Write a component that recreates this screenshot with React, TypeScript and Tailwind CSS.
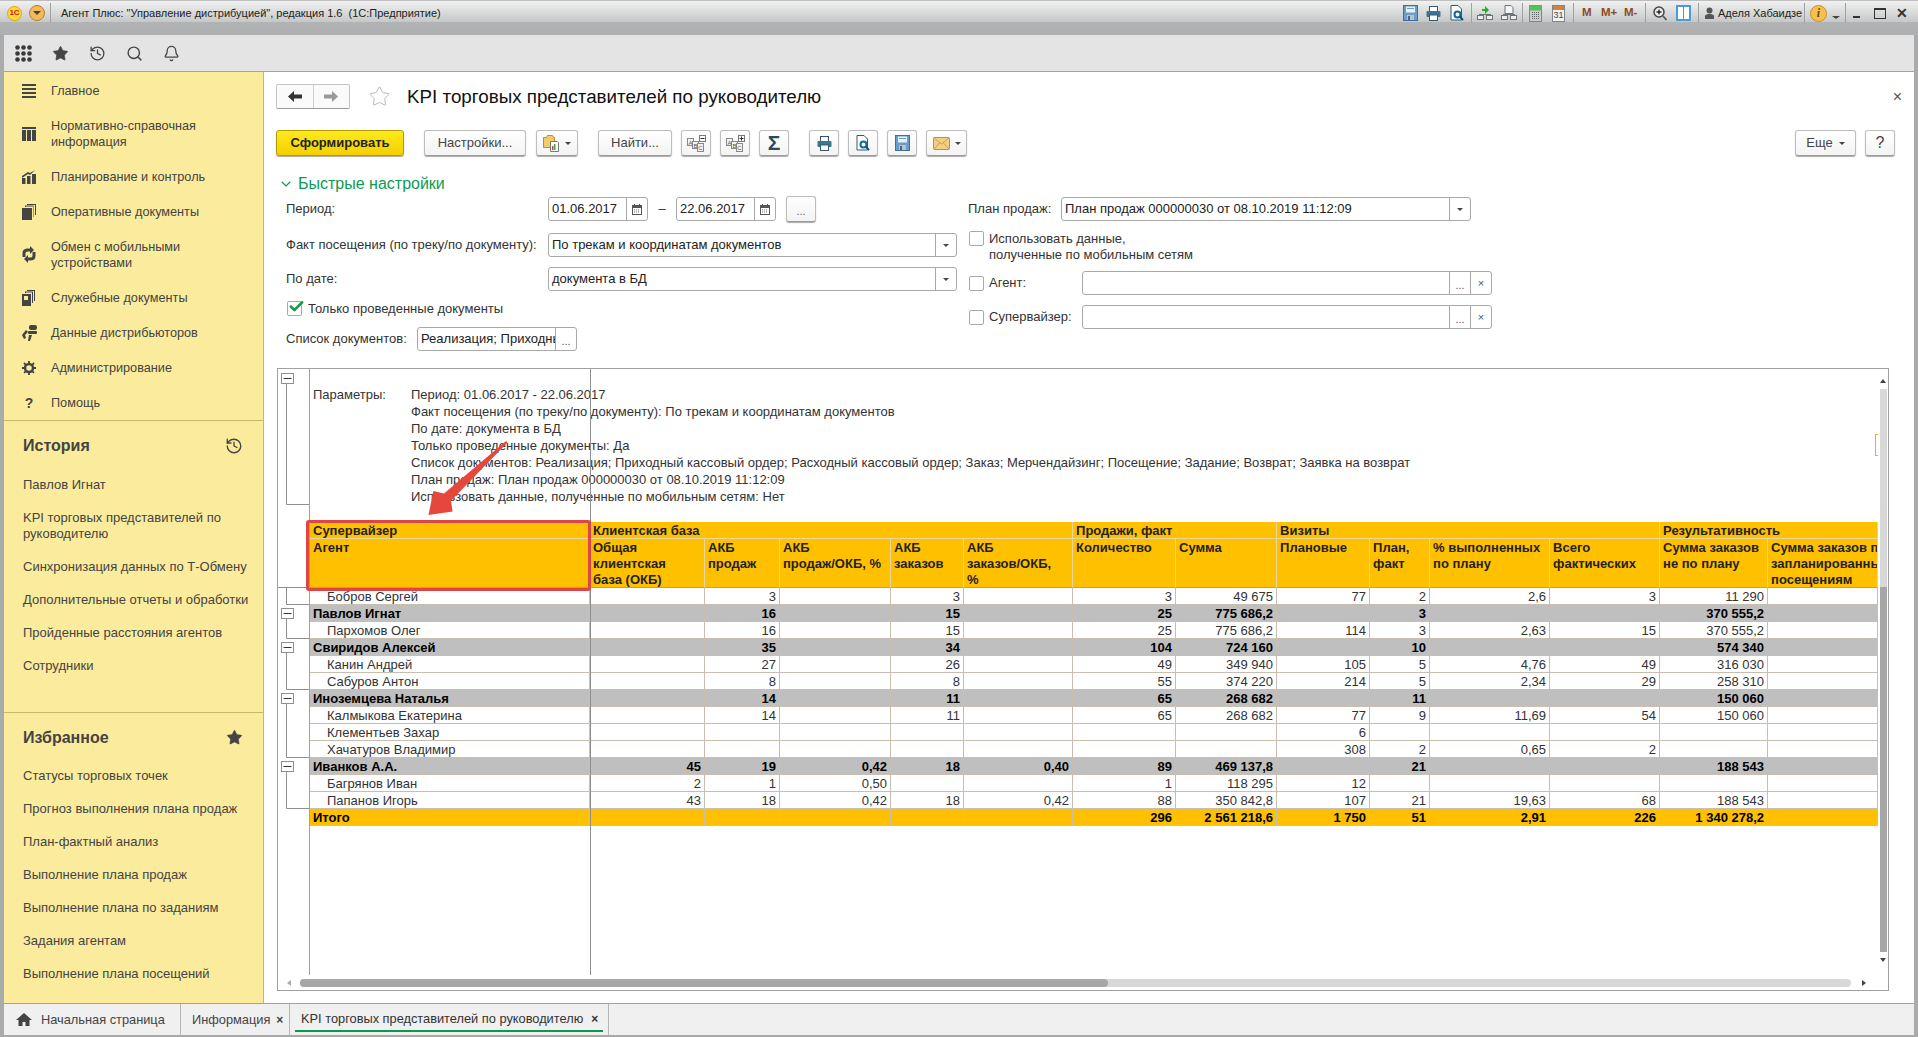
import { ReactNode } from "react";
import { Bell, Check, ChevronDown, History, Search, Star } from "lucide-react";

const FloppyIcon = () => (
  <svg width="15" height="16" viewBox="0 0 15 16">
    <rect x="0.5" y="0.5" width="14" height="15" fill="#6d9cc9" stroke="#3f6f9f" />
    <rect x="3" y="1.5" width="9" height="6" fill="#e8f0f8" />
    <rect x="4" y="3" width="7" height="1" fill="#6d9cc9" />
    <rect x="4" y="10" width="7" height="5" fill="#b8c4cc" />
    <rect x="5" y="11" width="2" height="4" fill="#4b6478" />
  </svg>
);

const PrinterIcon = () => (
  <svg width="15" height="15" viewBox="0 0 15 15">
    <rect x="3.5" y="0.5" width="8" height="5" fill="#fff" stroke="#33586f" />
    <rect x="0.5" y="5" width="14" height="6" rx="1" fill="#3f7396" />
    <rect x="3.5" y="9" width="8" height="5.5" fill="#fff" stroke="#33586f" />
  </svg>
);

const PreviewIcon = () => (
  <svg width="14" height="16" viewBox="0 0 14 16">
    <path d="M1 .5h7l3.500 3.500v11H1z" fill="#fff" stroke="#33586f" />
    <circle cx="7.500" cy="9.500" r="3" fill="#fff" stroke="#0f6a96" strokeWidth="2" />
    <path d="M10 12l3 3" stroke="#0f4f76" strokeWidth="2" />
  </svg>
);

const TransferIcon = ({ green }: { green?: boolean }) => (
  <svg width="16" height="16" viewBox="0 0 16 16">
    {green ? <path d="M5 4h3V1l4 4-4 4V6H5z" fill="#22b322" /> : <path d="M4 .5h6l2 2v6H4z" fill="#f4f4f4" stroke="#6c7278" />}
    <rect x="0.500" y="10.500" width="6" height="4" fill="#eee" stroke="#6c7278" />
    <rect x="9.500" y="10.500" width="6" height="4" fill="#eee" stroke="#6c7278" />
    <path d="M2 9.500h12" stroke="#6c7278" />
  </svg>
);

const CalcIcon = () => (
  <svg width="13" height="17" viewBox="0 0 13 17">
    <rect x="0.500" y="0.500" width="12" height="16" fill="#c9cdce" stroke="#80878a" />
    <rect x="0.500" y="0.500" width="12" height="5" fill="#54c15a" />
    <path d="M3 7.500h7M3 9.500h7M3 11.500h7M3 13.500h7" stroke="#5d6467" strokeDasharray="1 1" />
  </svg>
);

const CalendarIcon = () => (
  <div className="w-[13px] h-[17px] border border-[#80878a] bg-[#f2f2f2] flex flex-col items-center">
    <div className="w-full h-[4px] bg-[#d27f42]" />
    <span className="text-[9px] leading-[11px] text-[#444]">31</span>
  </div>
);

const MagnifierPlus = () => (
  <svg width="14" height="15" viewBox="0 0 14 15">
    <circle cx="6" cy="6" r="5" fill="#eee" stroke="#444" strokeWidth="1.500" />
    <path d="M3.500 6h5M6 3.500v5" stroke="#222" strokeWidth="1.300" />
    <path d="M10 10l3.500 4" stroke="#555" strokeWidth="1.800" />
  </svg>
);

const DocAbcIcon = ({ plus }: { plus?: boolean }) => (
  <svg width="19" height="17" viewBox="0 0 19 17" fontFamily="Liberation Sans" fontSize="6" fill="#555" textAnchor="middle">
    <rect x="0.500" y="3.500" width="6" height="7" fill="#f4f4f4" stroke="#888" />
    <rect x="5.500" y="6.500" width="6" height="7" fill="#f4f4f4" stroke="#888" />
    <rect x="10.500" y="8.500" width="6" height="8" fill="#f4f4f4" stroke="#888" />
    <text x="3.500" y="9.500">A</text>
    <text x="8.500" y="12.500">B</text>
    <text x="13.500" y="15">C</text>
    <rect x="12.500" y="0.500" width="6" height="6" fill="#fff" stroke="#777" />
    <path d="M13.500 3.500h4" stroke="#333" />
    {plus && <path d="M15.500 1.500v4" stroke="#333" />}
  </svg>
);

const MailIcon = () => (
  <svg width="17" height="13" viewBox="0 0 17 13">
    <rect x="0.500" y="0.500" width="16" height="12" rx="1" fill="#f6cf85" stroke="#c98e33" />
    <path d="M1 1l7.500 6L16 1M1 12l5.500-6M16 12l-5.500-6" fill="none" stroke="#d19a44" />
  </svg>
);

const FolderReportIcon = () => (
  <svg width="16" height="18" viewBox="0 0 16 18">
    <path d="M0.500 3.500h3l1-2h5l1 2h1v10H.500z" fill="#f2cd6e" stroke="#b98d2c" />
    <path d="M7.500 7.500h7l1 1v9h-8z" fill="#fff" stroke="#777" />
    <rect x="9" y="12" width="1.500" height="4" fill="#d04040" />
    <rect x="11" y="10" width="1.500" height="6" fill="#44a044" />
  </svg>
);

const Caret = ({ className = "" }: { className?: string }) => (
  <span className={`inline-block w-0 h-0 border-x-[3px] border-x-transparent border-t-[3px] border-t-[#444] ${className}`} />
);

const TitleSep = ({ className }: { className: string }) => <div className={`w-px h-[20px] bg-[#9fa1a3] ${className}`} />;

const TitleBar = () => (
  <div className="h-[35px] shrink-0 bg-[linear-gradient(to_bottom,#8c8c8c_0,#f1f1f1_1px,#c6c7c8_22px,#b2b3b4_22px,#aeafb0_35px)]">
    <div className="h-[26px] flex items-center text-[11px] text-[#222]">
      <div className="ml-[7px] w-[15px] h-[15px] rounded-full bg-[#ffd83a] border border-[#e0a800] flex items-center justify-center text-[8px] leading-none font-bold text-[#d4201c]">
        1С
      </div>
      <div className="ml-[7px] w-[16px] h-[16px] rounded-full bg-[#f5b85a] border border-[#b9802f] flex items-center justify-center">
        <Caret className="border-x-[4px] border-t-[4px]" />
      </div>
      <TitleSep className="ml-[5px]" />
      <span className="ml-[10px] whitespace-pre">Агент Плюс: "Управление дистрибуцией", редакция 1.6  (1С:Предприятие)</span>
      <div className="ml-auto flex items-center">
        <FloppyIcon />
        <div className="ml-[8px]"><PrinterIcon /></div>
        <div className="ml-[9px]"><PreviewIcon /></div>
        <TitleSep className="ml-[7px]" />
        <div className="ml-[5px]"><TransferIcon green /></div>
        <div className="ml-[8px]"><TransferIcon /></div>
        <TitleSep className="ml-[5px]" />
        <div className="ml-[6px]"><CalcIcon /></div>
        <div className="ml-[10px]"><CalendarIcon /></div>
        <TitleSep className="ml-[8px]" />
        <span className="ml-[8px] w-[10px] text-[11.500px] font-bold text-[#8a4d22]">M</span>
        <span className="ml-[9px] w-[16px] text-[11.500px] font-bold text-[#8a4d22] whitespace-nowrap">M+</span>
        <span className="ml-[7px] w-[14px] text-[11.500px] font-bold text-[#8a4d22] whitespace-nowrap">M-</span>
        <TitleSep className="ml-[7px]" />
        <div className="ml-[7px]"><MagnifierPlus /></div>
        <div className="ml-[9px] w-[15px] h-[16px] border-2 border-[#4b9bd8] bg-white flex justify-center">
          <div className="w-px bg-[#4b9bd8]" />
        </div>
        <TitleSep className="ml-[7px]" />
        <svg className="ml-[5px]" width="11" height="13" viewBox="0 0 11 13">
          <circle cx="5.500" cy="3.500" r="3" fill="#555" />
          <path d="M1 12V8.500Q5.500 5 10 8.500V12z" fill="#555" />
        </svg>
        <span className="ml-[3px] w-[82px] text-[11px] whitespace-nowrap">Аделя Хабаидзе</span>
        <TitleSep className="ml-[4px]" />
        <div className="ml-[5px] w-[17px] h-[17px] rounded-full bg-[#f6c04d] border border-[#c98e33] flex items-center justify-center font-['Liberation_Serif'] italic font-bold text-[12px] leading-none text-[#6b4a12]">
          i
        </div>
        <Caret className="ml-[5px] mt-[8px] border-x-[4px]" />
        <TitleSep className="ml-[5px]" />
        <div className="ml-[7px] mt-[8px] w-[7px] h-[2px] bg-[#333]" />
        <div className="ml-[14px] w-[12px] h-[11px] border border-[#333] border-t-2 bg-transparent" />
        <span className="ml-[10px] mr-[12px] w-[10px] text-[14px] leading-none font-bold text-[#333]">✕</span>
      </div>
    </div>
  </div>
);

const GridDots = () => (
  <svg width="17" height="17" viewBox="0 0 17 17" fill="#3a3a3a">
    {[0, 1, 2].map((row) =>
      [0, 1, 2].map((col) => <circle key={`${row}${col}`} cx={2.5 + col * 6} cy={2.5 + row * 6} r="2.300" />)
    )}
  </svg>
);

const AppToolbar = () => (
  <div className="h-[37px] shrink-0 bg-[#e4e4e4] border-b border-[#a2a2a2] flex items-center pl-[11px] gap-[20px] text-[#444]">
    <GridDots />
    <Star size={17} fill="#444" strokeWidth={1} />
    <History size={17} strokeWidth={1.8} />
    <Search size={17} strokeWidth={2} />
    <Bell size={17} strokeWidth={1.8} />
  </div>
);

const navIcons: Record<string, ReactNode> = {
  menu: (
    <svg width="14" height="14" viewBox="0 0 14 14" fill="#444">
      <rect y="0" width="14" height="2" /><rect y="4" width="14" height="2" /><rect y="8" width="14" height="2" /><rect y="12" width="14" height="2" />
    </svg>
  ),
  table: (
    <svg width="14" height="14" viewBox="0 0 14 14" fill="#444">
      <rect y="0" width="14" height="2" /><rect y="3" width="4" height="11" /><rect x="5" y="3" width="4" height="11" /><rect x="10" y="3" width="4" height="11" />
    </svg>
  ),
  chart: (
    <svg width="14" height="14" viewBox="0 0 14 14" fill="#444">
      <rect y="8" width="3.500" height="6" /><rect x="5" y="6" width="3.500" height="8" /><rect x="10" y="4" width="4" height="10" /><path d="M0 6l6-4 2 1 5-3-5 5-2-1-6 4z" />
    </svg>
  ),
  docs: (
    <svg width="14" height="16" viewBox="0 0 14 16" fill="#444">
      <rect x="0" y="4" width="10" height="12" /><path d="M3 3V1.500h8.500V13H11V2.500H4V3z" /><path d="M5 1V0h9v11h-1V1z" />
    </svg>
  ),
  sync: (
    <svg width="14" height="17" viewBox="0 0 14 17" fill="none" stroke="#444" strokeWidth="3">
      <path d="M2 11V7q0-3 4-3h3M12 6v4q0 3-4 3H5" />
      <path d="M8 0l4 4-4 4z" fill="#444" stroke="none" /><path d="M6 9l-4 4 4 4z" fill="#444" stroke="none" />
    </svg>
  ),
  service: (
    <svg width="13" height="16" viewBox="0 0 13 16" fill="#444">
      <rect x="0" y="4" width="9" height="12" /><rect x="2" y="6" width="4" height="4" fill="#fbeb9c" /><path d="M3 3V1.500h8V13h-1V2.500H4V3z" /><path d="M5 1V0h8v11h-1V1z" />
    </svg>
  ),
  dist: (
    <svg width="16" height="16" viewBox="0 0 16 16" fill="#444">
      <rect x="7" y="0" width="8" height="5" rx="2" /><rect x="6" y="6" width="9" height="3" rx="1" /><path d="M4 5L0 10l2 4 2-1-1-3 3-3zM7 10h3l-2 6H6z" />
    </svg>
  ),
  gear: (
    <svg width="14" height="14" viewBox="0 0 14 14">
      <circle cx="7" cy="7" r="4" fill="none" stroke="#444" strokeWidth="2.500" />
      <path d="M7 0v14M0 7h14M2 2l10 10M12 2L2 12" stroke="#444" strokeWidth="1.800" strokeDasharray="2.500 9" />
    </svg>
  ),
  help: <span className="w-[14px] text-center text-[14px] leading-none font-bold text-[#444]">?</span>,
};

const navItems: { icon: string; text: ReactNode; tall?: boolean }[] = [
  { icon: "menu", text: "Главное" },
  { icon: "table", text: <>Нормативно-справочная<br />информация</>, tall: true },
  { icon: "chart", text: "Планирование и контроль" },
  { icon: "docs", text: "Оперативные документы" },
  { icon: "sync", text: <>Обмен с мобильными<br />устройствами</>, tall: true },
  { icon: "service", text: "Служебные документы" },
  { icon: "dist", text: "Данные дистрибьюторов" },
  { icon: "gear", text: "Администрирование" },
  { icon: "help", text: "Помощь" },
];

const historyItems: ReactNode[] = [
  "Павлов Игнат",
  <>KPI торговых представителей по<br />руководителю</>,
  "Синхронизация данных по Т-Обмену",
  "Дополнительные отчеты и обработки",
  "Пройденные расстояния агентов",
  "Сотрудники",
];

const favoriteItems = [
  "Статусы торговых точек",
  "Прогноз выполнения плана продаж",
  "План-фактный анализ",
  "Выполнение плана продаж",
  "Выполнение плана по заданиям",
  "Задания агентам",
  "Выполнение плана посещений",
];

const SideHeading = ({ title, icon, className = "h-[47px]" }: { title: string; icon: ReactNode; className?: string }) => (
  <div className={`${className} pt-[3px] pl-[19px] pr-[20px] flex items-center justify-between text-[16px] font-bold text-[#444]`}>
    {title}
    {icon}
  </div>
);

const Sidebar = () => (
  <aside className="w-[260px] shrink-0 bg-[#fbeb9c] border-r border-[#c9b866] flex flex-col text-[13px] leading-[16px] text-[#444]">
    <nav className="pt-px h-[348px] shrink-0 text-[12.700px]">
      {navItems.map((item) => (
        <div key={item.icon} className={`flex items-center ${item.tall ? "h-[51px]" : "h-[35px]"}`}>
          <div className="w-[47px] pl-[18px] flex items-center shrink-0">{navIcons[item.icon]}</div>
          <div>{item.text}</div>
        </div>
      ))}
    </nav>
    <section className="h-[292px] shrink-0 border-t border-[#c9b866]">
      <SideHeading title="История" icon={<History size={18} strokeWidth={1.8} />} />
      {historyItems.map((item, i) => (
        <div key={i} className="py-[8.5px] pl-[19px]">{item}</div>
      ))}
    </section>
    <section className="border-t border-[#c9b866]">
      <SideHeading className="h-[46px]" title="Избранное" icon={<Star size={17} fill="#444" strokeWidth={1} />} />
      {favoriteItems.map((item) => (
        <div key={item} className="py-[8.5px] pl-[19px]">{item}</div>
      ))}
    </section>
  </aside>
);

const Btn = ({ className = "", children }: { className?: string; children: ReactNode }) => (
  <button className={`h-[26px] shrink-0 flex items-center justify-center rounded-[3px] border border-[#bdbdbd] border-b-[#9a9a9a] bg-[linear-gradient(to_bottom,#ffffff,#f3f3f3)] shadow-[0_1px_1px_#aaa] text-[13px] text-[#444] ${className}`}>
    {children}
  </button>
);

const Field = ({ className = "", children, buttons }: { className?: string; children?: ReactNode; buttons: ReactNode }) => (
  <div className={`h-[24px] flex rounded-[3px] border border-[#a9a9a9] bg-white text-[13px] leading-[22px] text-[#222] ${className}`}>
    <div className="flex-1 pl-[3px] overflow-hidden whitespace-nowrap">{children}</div>
    {buttons}
  </div>
);

const FieldBtn = ({ className = "w-[21px]", children }: { className?: string; children: ReactNode }) => (
  <div className={`${className} shrink-0 border-l border-[#a9a9a9] flex items-center justify-center text-[#555]`}>{children}</div>
);

const CalIcon = () => (
  <svg width="10" height="11" viewBox="0 0 10 11">
    <rect x="0.500" y="1.500" width="9" height="9" fill="#fff" stroke="#555" />
    <rect x="0" y="1" width="10" height="3" fill="#555" />
    <rect x="2" y="0" width="1" height="2" fill="#555" /><rect x="7" y="0" width="1" height="2" fill="#555" />
    <path d="M2 6h6M2 8h6" stroke="#777" strokeDasharray="1 1" />
  </svg>
);

const Dots = () => <span className="text-[11px] leading-none text-[#555] pt-[5px]">...</span>;
const Cross = () => <span className="text-[11px] leading-none text-[#555]">×</span>;

const CheckBox = ({ checked, className = "" }: { checked?: boolean; className?: string }) => (
  <div className={`relative w-[15px] h-[15px] shrink-0 rounded-[2px] border border-[#a9a9a9] bg-white ${className}`}>
    {checked && <Check className="absolute -top-[4px] left-0" size={17} strokeWidth={3.5} color="#139a49" />}
  </div>
);

const BackArrow = ({ color, flip }: { color: string; flip?: boolean }) => (
  <svg className={flip ? "-scale-x-100" : ""} width="14" height="11" viewBox="0 0 14 11" fill={color}>
    <path d="M0 5.500L6 0v3.500h8v4H6V11z" />
  </svg>
);

const CommandRow = () => (
  <div className="mt-[21px] flex items-center pr-[19px]">
    <button className="h-[26px] w-[128px] rounded-[3px] border border-[#b39b00] bg-[linear-gradient(to_bottom,#fdea1c,#f5cf00)] shadow-[0_1px_1px_#aaa] text-[13px] font-bold text-[#222]">
      Сформировать
    </button>
    <Btn className="ml-[20px] w-[102px]">Настройки...</Btn>
    <Btn className="ml-[10px] w-[42px] gap-[6px]"><FolderReportIcon /><Caret /></Btn>
    <Btn className="ml-[20px] w-[74px]">Найти...</Btn>
    <Btn className="ml-[9px] w-[30px]"><DocAbcIcon /></Btn>
    <Btn className="ml-[9px] w-[30px]"><DocAbcIcon plus /></Btn>
    <Btn className="ml-[9px] w-[30px] text-[21px] font-bold text-[#33475b]">Σ</Btn>
    <Btn className="ml-[20px] w-[30px]"><PrinterIcon /></Btn>
    <Btn className="ml-[9px] w-[30px]"><PreviewIcon /></Btn>
    <Btn className="ml-[9px] w-[30px]"><FloppyIcon /></Btn>
    <Btn className="ml-[9px] w-[41px] gap-[5px]"><MailIcon /><Caret /></Btn>
    <Btn className="ml-auto w-[61px] gap-[6px]">Еще <Caret /></Btn>
    <Btn className="ml-[9px] w-[30px] text-[16px]">?</Btn>
  </div>
);

const QuickSettings = () => (
  <>
    <div className="mt-[15px] h-[25px] flex items-center gap-[4px] pl-[2px] text-[16px] text-[#0d9a52]">
      <ChevronDown size={16} strokeWidth={1.6} />
      <span>Быстрые настройки</span>
    </div>
    <div className="flex text-[13px] text-[#333]">
      <div className="w-[692px] shrink-0 pl-[10px] pt-[1px]">
        <div className="h-[24px] flex items-center">
          <span className="w-[262px]">Период:</span>
          <Field className="w-[100px]" buttons={<FieldBtn><CalIcon /></FieldBtn>}>01.06.2017</Field>
          <span className="w-[28px] text-center">–</span>
          <Field className="w-[100px]" buttons={<FieldBtn><CalIcon /></FieldBtn>}>22.06.2017</Field>
          <Btn className="ml-[10px] w-[30px]"><span className="text-[11px] text-[#666] pt-[5px]">...</span></Btn>
        </div>
        <div className="mt-[12px] h-[24px] flex items-center">
          <span className="w-[262px]">Факт посещения (по треку/по документу):</span>
          <Field className="w-[409px]" buttons={<FieldBtn><Caret /></FieldBtn>}>По трекам и координатам документов</Field>
        </div>
        <div className="mt-[10px] h-[24px] flex items-center">
          <span className="w-[262px]">По дате:</span>
          <Field className="w-[409px]" buttons={<FieldBtn><Caret /></FieldBtn>}>документа в БД</Field>
        </div>
        <div className="mt-[10px] h-[15px] flex items-center gap-[6px] pl-px">
          <CheckBox checked />
          <span>Только проведенные документы</span>
        </div>
        <div className="mt-[11px] h-[24px] flex items-center">
          <span className="w-[131px]">Список документов:</span>
          <Field className="w-[160px]" buttons={<FieldBtn><Dots /></FieldBtn>}>Реализация; Приходный</Field>
        </div>
      </div>
      <div className="pt-[1px]">
        <div className="h-[24px] flex items-center">
          <span className="w-[93px]">План продаж:</span>
          <Field className="w-[410px]" buttons={<FieldBtn><Caret /></FieldBtn>}>План продаж 000000030 от 08.10.2019 11:12:09</Field>
        </div>
        <div className="mt-[10px] h-[34px] flex items-start gap-[5px] pl-px leading-[16px]">
          <CheckBox />
          <span>Использовать данные,<br />полученные по мобильным сетям</span>
        </div>
        <div className="mt-[6px] h-[24px] flex items-center">
          <CheckBox className="ml-px" />
          <span className="ml-[5px] w-[93px]">Агент:</span>
          <Field className="w-[410px]" buttons={<><FieldBtn><Dots /></FieldBtn><FieldBtn><Cross /></FieldBtn></>} />
        </div>
        <div className="mt-[10px] h-[24px] flex items-center">
          <CheckBox className="ml-px" />
          <span className="ml-[5px] w-[93px]">Супервайзер:</span>
          <Field className="w-[410px]" buttons={<><FieldBtn><Dots /></FieldBtn><FieldBtn><Cross /></FieldBtn></>} />
        </div>
      </div>
    </div>
  </>
);

const paramLines = [
  "Период: 01.06.2017 - 22.06.2017",
  "Факт посещения (по треку/по документу): По трекам и координатам документов",
  "По дате: документа в БД",
  "Только проведенные документы: Да",
  "Список документов: Реализация; Приходный кассовый ордер; Расходный кассовый ордер; Заказ; Мерчендайзинг; Посещение; Задание; Возврат; Заявка на возврат",
  "План продаж: План продаж 000000030 от 08.10.2019 11:12:09",
  "Использовать данные, полученные по мобильным сетям: Нет",
];

type RowKind = "item" | "group" | "total";
const rows: { kind: RowKind; name: string; v: string[] }[] = [
  { kind: "item", name: "Бобров Сергей", v: ["", "3", "", "3", "", "3", "49 675", "77", "2", "2,6", "3", "11 290", ""] },
  { kind: "group", name: "Павлов Игнат", v: ["", "16", "", "15", "", "25", "775 686,2", "", "3", "", "", "370 555,2", ""] },
  { kind: "item", name: "Пархомов Олег", v: ["", "16", "", "15", "", "25", "775 686,2", "114", "3", "2,63", "15", "370 555,2", ""] },
  { kind: "group", name: "Свиридов Алексей", v: ["", "35", "", "34", "", "104", "724 160", "", "10", "", "", "574 340", ""] },
  { kind: "item", name: "Канин Андрей", v: ["", "27", "", "26", "", "49", "349 940", "105", "5", "4,76", "49", "316 030", ""] },
  { kind: "item", name: "Сабуров Антон", v: ["", "8", "", "8", "", "55", "374 220", "214", "5", "2,34", "29", "258 310", ""] },
  { kind: "group", name: "Иноземцева Наталья", v: ["", "14", "", "11", "", "65", "268 682", "", "11", "", "", "150 060", ""] },
  { kind: "item", name: "Калмыкова Екатерина", v: ["", "14", "", "11", "", "65", "268 682", "77", "9", "11,69", "54", "150 060", ""] },
  { kind: "item", name: "Клементьев Захар", v: ["", "", "", "", "", "", "", "6", "", "", "", "", ""] },
  { kind: "item", name: "Хачатуров Владимир", v: ["", "", "", "", "", "", "", "308", "2", "0,65", "2", "", ""] },
  { kind: "group", name: "Иванков А.А.", v: ["45", "19", "0,42", "18", "0,40", "89", "469 137,8", "", "21", "", "", "188 543", ""] },
  { kind: "item", name: "Багрянов Иван", v: ["2", "1", "0,50", "", "", "1", "118 295", "12", "", "", "", "", ""] },
  { kind: "item", name: "Папанов Игорь", v: ["43", "18", "0,42", "18", "0,42", "88", "350 842,8", "107", "21", "19,63", "68", "188 543", ""] },
  { kind: "total", name: "Итого", v: ["", "", "", "", "", "296", "2 561 218,6", "1 750", "51", "2,91", "226", "1 340 278,2", ""] },
];

const colWidths = [280, 115, 75, 111, 73, 109, 103, 101, 93, 60, 120, 110, 108, 110];

const headers: ReactNode[] = [
  <>Общая<br />клиентская<br />база (ОКБ)</>,
  <>АКБ<br />продаж</>,
  <>АКБ<br />продаж/ОКБ, %</>,
  <>АКБ<br />заказов</>,
  <>АКБ<br />заказов/ОКБ,<br />%</>,
  "Количество",
  "Сумма",
  "Плановые",
  <>План,<br />факт</>,
  <>% выполненных<br />по плану</>,
  <>Всего<br />фактических</>,
  <>Сумма заказов<br />не по плану</>,
  <>Сумма заказов по<br />запланированным<br />посещениям</>,
];

const rowBg: Record<RowKind, string> = {
  item: "bg-white",
  group: "bg-[#bfbfbf] font-bold text-black",
  total: "bg-[#ffc000] font-bold text-black",
};

const ReportTable = () => (
  <table className="table-fixed w-[1568px] border-separate border-spacing-0 text-[13px] leading-[16px] text-[#333]">
    <colgroup>
      {colWidths.map((w, i) => <col key={i} style={{ width: w }} />)}
    </colgroup>
    <tbody>
      <tr className="bg-[#ffc000] font-bold text-[#222]">
        {[["Супервайзер", 1], ["Клиентская база", 5], ["Продажи, факт", 2], ["Визиты", 4], ["Результативность", 2]].map(([title, span]) => (
          <td key={title} colSpan={span as number} className="h-[17px] p-0 pt-[2px] pl-[3px] leading-[14px] border-r border-b border-[#e8d8a0] whitespace-nowrap overflow-hidden">
            {title}
          </td>
        ))}
      </tr>
      <tr className="bg-[#ffc000] font-bold text-[#222] align-top">
        <td className="h-[49px] p-0 pt-px pl-[3px] border-r border-b border-r-[#e8d8a0] border-b-[#a0a0a0]">Агент</td>
        {headers.map((h, i) => (
          <td key={i} className="h-[49px] p-0 pt-px pl-[3px] border-r border-b border-r-[#e8d8a0] border-b-[#a0a0a0] whitespace-nowrap overflow-hidden">
            <div className="h-[47px]">{h}</div>
          </td>
        ))}
      </tr>
      {rows.map((row) => (
        <tr key={row.name} className={rowBg[row.kind]}>
          <td className={`h-[17px] p-0 pt-[2px] leading-[14px] border-r border-b border-[#c9bfb0] whitespace-nowrap overflow-hidden ${row.kind === "item" ? "pl-[17px]" : "pl-[3px]"}`}>
            {row.name}
          </td>
          {row.v.map((value, i) => (
            <td key={i} className="h-[17px] p-0 pt-[2px] pr-[3px] leading-[14px] text-right border-r border-b border-[#c9bfb0] whitespace-nowrap overflow-hidden">
              {value}
            </td>
          ))}
        </tr>
      ))}
    </tbody>
  </table>
);

// outline brackets of the grouped rows
const outlineGroups = [
  { box: 9, end: 135 },
  { box: 244, end: 269 },
  { box: 278, end: 320 },
  { box: 329, end: 388 },
  { box: 397, end: 439 },
];

const OutlineGutter = () => (
  <div className="w-[32px] shrink-0 border-r border-[#a0a0a0]">
    <svg width="31" height="606" viewBox="0 0 31 606" fill="none" stroke="#8f8f8f">
      <path d="M0 218.500h31M8.500 219v16.500H31" />
      {outlineGroups.map(({ box, end }) => (
        <g key={box}>
          <rect x="3.500" y={box - 4.5} width="12" height="10" fill="#fff" />
          <path d={`M5.500 ${box + 0.5}h8`} stroke="#333" />
          <path d={`M8.500 ${box + 5.5}V${end + 0.5}H31`} />
        </g>
      ))}
    </svg>
  </div>
);

const ReportPanel = () => (
  <div className="relative ml-px mt-[17px] h-[623px] w-[1612px] border border-[#a0a0a0] flex flex-col">
    <div className="flex h-[606px]">
      <OutlineGutter />
      <div className="relative w-[1568px] overflow-hidden">
        <div className="h-[153px] pt-[17px] pl-[3px] grid grid-cols-[98px_1fr] text-[13px] leading-[17px] text-[#333]">
          <span>Параметры:</span>
          <div>
            {paramLines.map((line) => <div key={line} className="whitespace-nowrap">{line}</div>)}
          </div>
        </div>
        <ReportTable />
        <div className="absolute left-[280px] top-0 bottom-0 w-px bg-[#8f8f8f]" />
        <div className="absolute left-[1565px] top-[65px] w-[3px] h-[22px] border-l border-y border-[#f0b400]" />
      </div>
      <div className="flex-1 flex flex-col items-end pr-px">
        <span className="mt-[10px] mr-px w-0 h-0 border-x-[3px] border-x-transparent border-b-[4px] border-b-[#444]" />
        <div className="mt-[6px] w-[7px] h-[563px] bg-[#d8d8d8] flex flex-col justify-end">
          <div className="h-[365px] bg-[#a6a6a6]" />
        </div>
        <span className="mt-[6px] mr-px w-0 h-0 border-x-[3px] border-x-transparent border-t-[4px] border-t-[#444]" />
      </div>
    </div>
    <div className="h-[15px] flex items-center">
      <span className="ml-[9px] w-0 h-0 border-y-[3px] border-y-transparent border-r-[4px] border-r-[#aaa]" />
      <div className="ml-[9px] w-[1551px] h-[8px] rounded-full bg-[#d8d8d8]">
        <div className="w-[808px] h-[8px] rounded-full bg-[#a6a6a6]" />
      </div>
      <span className="ml-[11px] w-0 h-0 border-y-[3px] border-y-transparent border-l-[4px] border-l-[#444]" />
    </div>
    <div className="absolute left-[28px] top-[151px] w-[285px] h-[71px] rounded-[3px] border-[3px] border-[#e04545]" />
    <svg className="absolute left-[140px] top-[65px]" width="100" height="90" viewBox="140 65 100 90">
      <path d="M228 72L229.500 73.500 173 131.700 174.600 142.500 150.500 146 155.400 122 166 124.400z" fill="#e5473a" />
    </svg>
  </div>
);

const Tabs = () => (
  <div className="h-[32px] shrink-0 bg-[#f0f0f0] border-t border-[#a2a2a2] flex text-[12.800px] text-[#444] whitespace-nowrap">
    <div className="w-[177px] border-r border-[#b5b5b5] flex items-center pl-[12px] gap-[9px]">
      <svg width="16" height="13" viewBox="0 0 16 13" fill="#444">
        <path d="M8 0L0 7h2.500v6h4V9h3v4h4V7H16z" />
      </svg>
      Начальная страница
    </div>
    <div className="w-[109px] border-r border-[#b5b5b5] flex items-center pl-[11px] gap-[6px]">
      Информация <span className="font-bold text-[12px] leading-none">×</span>
    </div>
    <div className="w-[319px] border-r border-[#b5b5b5] px-[5px]">
      <div className="h-[28px] pt-[3px] border-b-[2px] border-[#0a9a4f] flex items-center pl-[6px] gap-[8px] text-[#333]">
        KPI торговых представителей по руководителю <span className="font-bold text-[12px] leading-none">×</span>
      </div>
    </div>
  </div>
);

export default function App() {
  return (
    <div className="w-[1918px] h-[1037px] overflow-hidden bg-white flex flex-col border-b-2 border-[#a9a9a9] font-['Liberation_Sans',Arial,sans-serif]">
      <TitleBar />
      <div className="flex-1 min-h-0 flex flex-col border-x-4 border-[#a9abad]">
        <AppToolbar />
        <div className="flex-1 min-h-0 flex">
          <Sidebar />
          <main className="flex-1 min-w-0 pl-[12px] pt-[12px]">
            <div className="h-[25px] flex items-center pr-[12px]">
              <div className="w-[74px] h-[25px] flex rounded-[2px] border border-[#c4c4c4] border-b-[#9a9a9a] bg-[#fafafa]">
                <span className="flex-1 border-r border-[#cfcfcf] flex items-center justify-center"><BackArrow color="#333" /></span>
                <span className="flex-1 flex items-center justify-center"><BackArrow color="#999" flip /></span>
              </div>
              <Star className="ml-[18px]" size={23} strokeWidth={1} color="#b5b5b5" />
              <h1 className="ml-[16px] pt-[2px] text-[18.800px] text-[#111]">KPI торговых представителей по руководителю</h1>
              <span className="ml-auto text-[16px] leading-none text-[#555]">×</span>
            </div>
            <CommandRow />
            <QuickSettings />
            <ReportPanel />
          </main>
        </div>
        <Tabs />
      </div>
    </div>
  );
}
